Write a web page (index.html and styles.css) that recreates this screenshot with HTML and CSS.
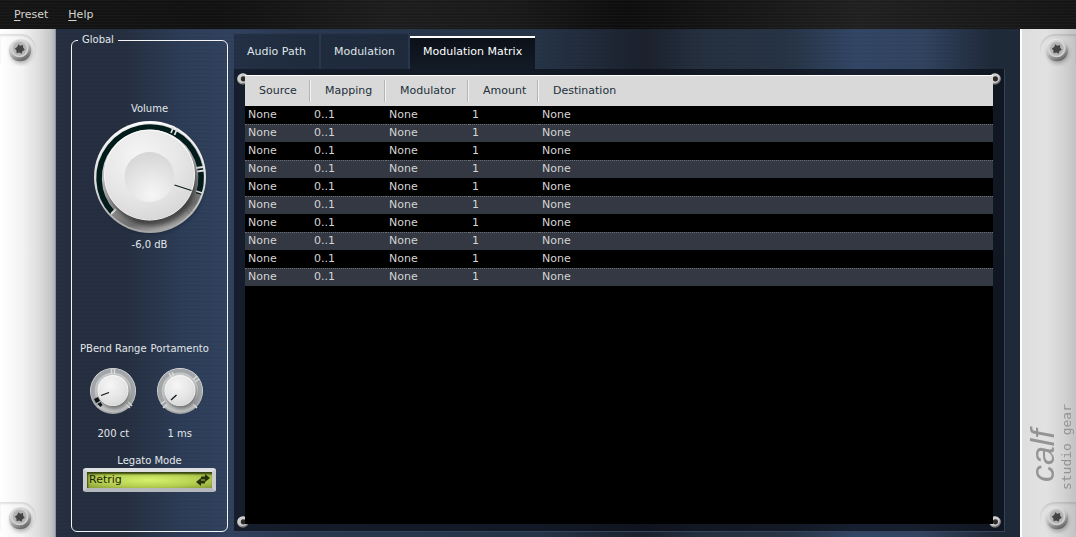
FILE: index.html
```html
<!DOCTYPE html>
<html lang="en">
<head>
<meta charset="utf-8">
<title>Calf Studio Gear</title>
<link rel="stylesheet" href="styles.css">
</head>
<body>
<svg class="defs" aria-hidden="true">
  <defs>
    <linearGradient id="ring" x1="0.3" y1="0" x2="0.65" y2="1">
      <stop offset="0" stop-color="#f4f4f4"/><stop offset="0.45" stop-color="#b4b4b4"/><stop offset="0.85" stop-color="#707070"/><stop offset="1" stop-color="#b0b0b0"/>
    </linearGradient>
    <linearGradient id="rim" x1="0" y1="0" x2="0" y2="1">
      <stop offset="0" stop-color="#ffffff"/><stop offset="0.6" stop-color="#d8d8d8"/><stop offset="1" stop-color="#a2a2a2"/>
    </linearGradient>
    <radialGradient id="cap" cx="0.4" cy="0.3" r="0.75">
      <stop offset="0" stop-color="#f6f6f6"/><stop offset="0.6" stop-color="#e6e6e6"/><stop offset="1" stop-color="#d6d6d6"/>
    </radialGradient>
    <radialGradient id="dimple" cx="0.55" cy="0.85" r="0.85">
      <stop offset="0" stop-color="#f6f6f6"/><stop offset="1" stop-color="#d6d6d6"/>
    </radialGradient>
    <linearGradient id="metal" x1="0.2" y1="0" x2="0.7" y2="1">
      <stop offset="0" stop-color="#f2f2f2"/><stop offset="0.5" stop-color="#c0c0c0"/><stop offset="1" stop-color="#5c5c5c"/>
    </linearGradient>
    <filter id="soft" x="-30%" y="-30%" width="160%" height="160%"><feGaussianBlur stdDeviation="2"/></filter>
    <symbol id="screw" viewBox="0 0 32 32">
      <circle cx="17" cy="19" r="10.5" fill="#444" opacity="0.4" filter="url(#soft)"/>
      <circle cx="16" cy="16" r="11.2" fill="url(#metal)"/>
      <circle cx="15.7" cy="14.5" r="8.800" fill="#d2d2d2"/>
      <circle cx="15.7" cy="14.8" r="7" fill="#b4b4b4"/>
      <path d="M14.200 10.200l2 1.600 2.800-.8.200 2.800 1.600 2-2.400 1.400-.8 2.600-2.400-1.200-2.600.6-.2-2.600-1.600-2.200 2.400-1.400z" fill="#444"/>
    </symbol>
    <symbol id="bolt" viewBox="0 0 12 12">
      <circle cx="6" cy="6" r="5.800" fill="url(#metal)"/>
      <circle cx="5.700" cy="5.500" r="4.600" fill="#cdcdcd"/>
      <circle cx="6.400" cy="5.800" r="2.600" fill="#2d2b29"/>
    </symbol>
  </defs>
</svg>

<header class="menubar">
  <button class="menu" type="button"><u>P</u>reset</button>
  <button class="menu" type="button"><u>H</u>elp</button>
</header>

<main class="rack">
  <aside class="ear ear-left">
    <span class="plate plate-top"><svg class="screw"><use href="#screw"/></svg></span>
    <span class="plate plate-bottom"><svg class="screw"><use href="#screw"/></svg></span>
  </aside>

  <div class="device">
    <fieldset class="global">
      <legend>Global</legend>
      <div class="control">
        <label for="volume">Volume</label>
        <div class="knob knob-large">
          <svg viewBox="0 0 112 112">
            <circle cx="58" cy="60" r="52" fill="#0b1220" opacity="0.5" filter="url(#soft)"/>
            <circle cx="56" cy="56" r="56" fill="url(#rim)"/>
            <circle cx="56" cy="56" r="54" fill="url(#ring)"/>
            <path d="M18.500 91.500A51 51 0 1 1 104.500 73" fill="none" stroke="#021c1c" stroke-width="5.500"/>
            <g stroke="#dedede" stroke-width="1.800">
              <path d="M77 12l3-7M80.500 14l3-7M102 47l7-1M103 50.500l7-1M102 70l6 2M22 88l-5 5"/>
              <path d="M92 89l4 4M94.500 86.500l4 4" stroke="#777" stroke-width="1"/>
            </g>
            <circle cx="58" cy="60" r="45" fill="#222" opacity="0.6" filter="url(#soft)"/>
            <circle cx="55.500" cy="54" r="45.500" fill="#fafafa"/>
            <circle cx="55.500" cy="54.500" r="44.700" fill="url(#cap)"/>
            <circle cx="55.500" cy="56" r="25" fill="url(#dimple)"/>
            <path d="M80.500 64l17 5.500" stroke="#0a1c1c" stroke-width="1.200"/>
          </svg>
          <input id="volume" type="range" min="-60" max="6" value="-6">
        </div>
        <output for="volume">-6,0 dB</output>
      </div>

      <div class="pair">
        <div class="control">
          <label for="bend">PBend Range</label>
          <div class="knob knob-small">
            <svg viewBox="0 0 46 46">
              <circle cx="23" cy="23" r="23" fill="url(#rim)"/>
              <circle cx="23" cy="23" r="21.500" fill="#c4c6c7"/>
              <path d="M8.500 37A20.300 20.300 0 1 1 37.500 37" fill="none" stroke="#a2a6a8" stroke-width="4"/>
              <path d="M21.500 1v5M24.500 1v5M36 36l4 4M38 34l4 4" stroke="#dadada" stroke-width="1.500"/>
              <path d="M4 31l4-2 2 4-4 2zM7.500 36l3-2 2 3-2 2z" fill="#101414"/>
              <circle cx="24.500" cy="26" r="15" fill="#333" opacity="0.6" filter="url(#soft)"/>
              <circle cx="23" cy="22.500" r="15.500" fill="#f6f6f6"/>
              <circle cx="23" cy="23" r="14.800" fill="url(#cap)"/>
              <path d="M11 27.500l8-3" stroke="#101414" stroke-width="1.300"/>
            </svg>
            <input id="bend" type="range" min="0" max="2400" value="200">
          </div>
          <output for="bend">200 ct</output>
        </div>
        <div class="control">
          <label for="portamento">Portamento</label>
          <div class="knob knob-small">
            <svg viewBox="0 0 46 46">
              <circle cx="23" cy="23" r="23" fill="url(#rim)"/>
              <circle cx="23" cy="23" r="21.500" fill="#c4c6c7"/>
              <path d="M8.500 37A20.300 20.300 0 1 1 37.500 37" fill="none" stroke="#a2a6a8" stroke-width="4"/>
              <path d="M12 5l3 5M15 4l2 4M36 12l4-4M38 14l4-3M36 36l4 4M10 36l-4 4M8 33l-4 3" stroke="#dadada" stroke-width="1.500"/>
              <circle cx="24.500" cy="26" r="15" fill="#333" opacity="0.6" filter="url(#soft)"/>
              <circle cx="23" cy="22.500" r="15.500" fill="#f6f6f6"/>
              <circle cx="23" cy="23" r="14.800" fill="url(#cap)"/>
              <path d="M14 32l5.500-5" stroke="#101414" stroke-width="1.300"/>
            </svg>
            <input id="portamento" type="range" min="1" max="2000" value="1">
          </div>
          <output for="portamento">1 ms</output>
        </div>
      </div>

      <label class="legato-label" for="legato">Legato Mode</label>
      <div class="combo">
        <select id="legato"><option>Retrig</option><option>Legato</option></select>
        <svg class="swap" viewBox="0 0 14 12"><path d="M5 2.500h4V0l5 4-5 4V5.500H5zM9 6.500H5V4L0 8l5 4V9.500h4z" fill="#26310c"/></svg>
      </div>
    </fieldset>

    <section class="notebook">
      <nav class="tabs" role="tablist">
        <button class="tab" role="tab" type="button">Audio Path</button>
        <button class="tab" role="tab" type="button">Modulation</button>
        <button class="tab tab-active" role="tab" type="button" aria-selected="true">Modulation Matrix</button>
      </nav>
      <div class="page">
        <svg class="bolt bolt-tl"><use href="#bolt"/></svg>
        <svg class="bolt bolt-tr"><use href="#bolt"/></svg>
        <svg class="bolt bolt-bl"><use href="#bolt"/></svg>
        <svg class="bolt bolt-br"><use href="#bolt"/></svg>
        <div class="list">
          <table class="matrix">
            <colgroup><col class="c-source"><col class="c-mapping"><col class="c-modulator"><col class="c-amount"><col></colgroup>
            <thead><tr><th>Source</th><th>Mapping</th><th>Modulator</th><th>Amount</th><th>Destination</th></tr></thead>
            <tbody>
              <tr><td>None</td><td>0..1</td><td>None</td><td>1</td><td>None</td></tr>
              <tr><td>None</td><td>0..1</td><td>None</td><td>1</td><td>None</td></tr>
              <tr><td>None</td><td>0..1</td><td>None</td><td>1</td><td>None</td></tr>
              <tr><td>None</td><td>0..1</td><td>None</td><td>1</td><td>None</td></tr>
              <tr><td>None</td><td>0..1</td><td>None</td><td>1</td><td>None</td></tr>
              <tr><td>None</td><td>0..1</td><td>None</td><td>1</td><td>None</td></tr>
              <tr><td>None</td><td>0..1</td><td>None</td><td>1</td><td>None</td></tr>
              <tr><td>None</td><td>0..1</td><td>None</td><td>1</td><td>None</td></tr>
              <tr><td>None</td><td>0..1</td><td>None</td><td>1</td><td>None</td></tr>
              <tr><td>None</td><td>0..1</td><td>None</td><td>1</td><td>None</td></tr>
            </tbody>
          </table>
        </div>
      </div>
    </section>
  </div>

  <aside class="ear ear-right">
    <span class="plate plate-top"><svg class="screw"><use href="#screw"/></svg></span>
    <div class="brand"><span class="brand-name">calf</span><span class="brand-sub">studio gear</span></div>
    <span class="plate plate-bottom"><svg class="screw"><use href="#screw"/></svg></span>
  </aside>
</main>
</body>
</html>
```

FILE: styles.css
```css
* { box-sizing: border-box; }

body {
  margin: 0;
  min-height: 100vh;
  display: flex;
  flex-direction: column;
  background: #1e2938;
  color: #e2e6ea;
  font: 11px/14px "DejaVu Sans", sans-serif;
}

button, select { font: inherit; color: inherit; }

.defs { position: absolute; width: 0; height: 0; }

/* Menu bar */
.menubar {
  height: 29px;
  display: flex;
  align-items: center;
  gap: 20px;
  padding: 0 14px;
  background:
    repeating-linear-gradient(#ffffff06 0 1px, transparent 1px 3px),
    linear-gradient(90deg, #151515, #111 20%, #1d1d1d 36%, #191919 48%, #0d0d0d 58%, #202020 80%, #151515);
}
.menu { padding: 0; border: 0; background: none; color: #d4d4d0; }
.menu u { text-underline-offset: 2px; }

/* Rack */
.rack { flex: 1; display: flex; }

.ear {
  display: flex;
  flex-direction: column;
  justify-content: space-between;
  overflow: hidden;
}
.ear-left {
  width: 56px;
  border-right: 1px solid #8b949e;
  background: linear-gradient(90deg, #fff, #f3f3f3 40%, #dcdcdc 72%, #c6c6c6 92%, #aeb2b6);
}
.ear-right {
  width: 56px;
  align-items: flex-end;
  border-left: 2px solid #fff;
  background: linear-gradient(90deg, #dedede, #e2e2e2 45%, #d4d4d4 75%, #c2c2c2);
}
.plate { display: block; width: 36px; height: 30px; }
.plate-top { margin-top: 5px; box-shadow: inset 0 2px 2px #0000001c; }
.plate-bottom { margin-bottom: 5px; box-shadow: inset 0 2px 2px #0000001c; }
.ear-left .plate { padding-left: 4px; border-radius: 0 15px 15px 0; }
.ear-right .plate { padding-left: 1px; border-radius: 15px 0 0 15px; }
.screw { display: block; width: 32px; height: 32px; }

.brand {
  margin: auto 3px 12px 0;
  writing-mode: vertical-rl;
  transform: rotate(180deg);
  display: flex;
  flex-direction: column;
  gap: 2px;
  color: #949494;
}
.brand-name { padding-top: 8px; font: italic 34px/34px "Liberation Sans", sans-serif; }
.brand-sub { font: 13px/12px "DejaVu Sans Mono", monospace; }

/* Device face */
.device {
  flex: 1;
  display: flex;
  gap: 6px;
  padding: 5px 15px 5px;
  background:
    repeating-linear-gradient(#0000000c 0 1px, transparent 1px 4px),
    linear-gradient(90deg, #262f41, #252f40 7%, #2d3d57 13%, #31425e 18%, #2a3850 25%, #28364b 40%, #263447 50%, #1b212d 61%, #25303f 67%, #273445 76%, #324666 83%, #31435f 90%, #1f2a39 97%);
}

.global {
  width: 157px;
  margin: 0;
  padding: 56px 11px 39px;
  border: 1px solid #f2f4f6;
  border-radius: 6px;
  display: flex;
  flex-direction: column;
  align-items: stretch;
  font-size: 10px;
}
.global legend { padding: 0 4px; margin-left: -5px; line-height: 12px; }

.control { display: flex; flex-direction: column; align-items: center; }
.control label { white-space: nowrap; }
.knob { position: relative; }
.knob svg { display: block; width: 100%; height: 100%; overflow: visible; }
.knob input { position: absolute; inset: 0; width: 100%; height: 100%; margin: 0; opacity: 0; }
.knob-large { width: 112px; height: 112px; margin: 5px 0; }
.knob-small { width: 46px; height: 46px; margin: 12px 0 13px; }

.pair { display: flex; gap: 4px; margin: auto 0 0 -3px; }
.legato-label { margin-top: 13px; text-align: center; }
.combo { position: relative; }
.combo select {
  display: block;
  width: 100%;
  height: 24px;
  padding: 0 2px;
  appearance: none;
  border: 4px solid;
  border-color: #dedfe0 #c9cbcd #b4b8bd;
  border-radius: 3px;
  background: radial-gradient(ellipse at center, #d6f26c, #b4cd50 60%, #869b34);
  box-shadow: inset 1px 2px 2px #34420f;
  color: #1c2408;
  font-size: 11px;
}
.swap { position: absolute; right: 6px; top: 6px; width: 14px; height: 12px; pointer-events: none; }

/* Notebook */
.notebook { flex: 1; min-width: 0; display: flex; flex-direction: column; }
.tabs { display: flex; gap: 2px; }
.tab {
  height: 35px;
  padding: 0 13px;
  border: 0;
  background: #16202e80;
  color: #dfe4e8;
}
.tab-active {
  background: linear-gradient(transparent 0 2px, #fff 2px 4px, #0b1018 4px, #131b26);
  color: #fff;
}
.page {
  flex: 1;
  position: relative;
  display: flex;
  padding: 6px 11px 7px 11px;
  border: solid #34435a;
  border-width: 0 1px 1px 0;
  background: #0a0f18b0;
}
.bolt { position: absolute; width: 12px; height: 12px; }
.bolt-tl { left: 3px; top: 4px; }
.bolt-tr { right: 3px; top: 4px; }
.bolt-bl { left: 3px; bottom: 3px; }
.bolt-br { right: 3px; bottom: 3px; }
.list { position: relative; flex: 1; background: #000; }

.matrix { width: 100%; table-layout: fixed; border-collapse: separate; border-spacing: 0; }
.c-source { width: 66px; }
.c-mapping { width: 75px; }
.c-modulator { width: 83px; }
.c-amount { width: 70px; }
.matrix th {
  height: 31px;
  padding: 0 0 0 14px;
  border-top: 1px solid #fff;
  background: linear-gradient(90deg, #b4b4b4 1px, #f2f2f2 1px) right center / 2px 22px no-repeat #d9d9d9;
  color: #22303a;
  font-weight: normal;
  text-align: left;
}
.matrix th:last-child { background: #d9d9d9; }
.matrix td { height: 18px; padding: 0 0 0 3px; color: #d4d4d4; }
.matrix tr:nth-child(even) td { border-top: 1px dotted #6a6e76; padding-bottom: 1px; background: #333842; }
```
